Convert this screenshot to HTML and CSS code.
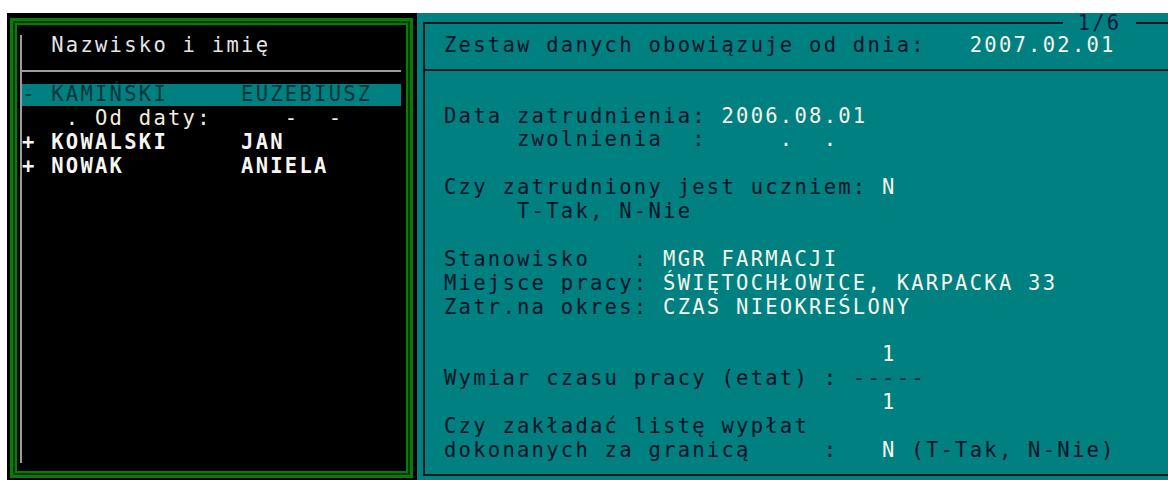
FILE: index.html
```html
<!DOCTYPE html>
<html lang="pl">
<head>
<meta charset="utf-8">
<title>Kadry – dane pracownika</title>
<link rel="stylesheet" href="styles.css">
</head>
<body>
<div class="screen">
  <section class="staff">
    <div class="frame">
      <div class="frame-inner">
        <div class="list">
          <div class="list-head">  Nazwisko i imię</div>
          <div class="list-rule"></div>
          <div class="row is-selected">- KAMIŃSKI     EUZEBIUSZ</div>
          <div class="row row-sub">   . Od daty:     -  -</div>
          <div class="row row-person">+ KOWALSKI     JAN</div>
          <div class="row row-person">+ NOWAK        ANIELA</div>
        </div>
      </div>
    </div>
  </section>

  <section class="record">
    <div class="box">
      <span class="page"> 1/6 </span>
      <div class="box-head">Zestaw danych obowiązuje od dnia:   <span class="val">2007.02.01</span></div>
      <div class="box-body">
        <div class="ln">Data zatrudnienia: <span class="val">2006.08.01</span></div>
        <div class="ln">     zwolnienia  : <span class="val">    .  .  </span></div>
        <div class="ln"></div>
        <div class="ln">Czy zatrudniony jest uczniem: <span class="val">N</span></div>
        <div class="ln">     T-Tak, N-Nie</div>
        <div class="ln"></div>
        <div class="ln">Stanowisko   : <span class="val">MGR FARMACJI</span></div>
        <div class="ln">Miejsce pracy: <span class="val">ŚWIĘTOCHŁOWICE, KARPACKA 33</span></div>
        <div class="ln">Zatr.na okres: <span class="val">CZAS NIEOKREŚLONY</span></div>
        <div class="ln"></div>
        <div class="ln">                              <span class="val">1</span></div>
        <div class="ln">Wymiar czasu pracy (etat) : -----</div>
        <div class="ln">                              <span class="val">1</span></div>
        <div class="ln">Czy zakładać listę wypłat</div>
        <div class="ln">dokonanych za granicą     :   <span class="val">N</span> (T-Tak, N-Nie)</div>
      </div>
    </div>
  </section>
</div>
</body>
</html>
```

FILE: styles.css
```css
* {
  box-sizing: border-box;
}

body {
  margin: 0;
  background: #ffffff;
}

/* 80-column text screen: every cell is 14.6px wide */
.screen {
  display: flex;
  width: 1161px;
  height: 467px;
  margin: 13px 0 0 7px;
  overflow: hidden;
  background: #000000;
  font-family: "DejaVu Sans Mono", "Liberation Mono", monospace;
  font-size: 20.5px;
  letter-spacing: 2.26px;
}

/* ---------- employee list (left) ---------- */
.staff {
  flex: none;
  display: flex;
  width: 410px;
  padding: 5px 4px 2px 3px;
  background: #000000;
}

.frame {
  flex: 1;
  display: flex;
  border: 3px solid #0b7a0b;
  padding: 2px;
  background: #003c00;
}

.frame-inner {
  flex: 1;
  display: flex;
  flex-direction: column;
  border: 2px solid #0b7a0b;
  background: #000000;
  padding: 10px 5px 8px 3px;
}

.list {
  flex: 1;
  border-left: 2px solid #9c9c9c;
}

.list-head {
  height: 20px;
  line-height: 20px;
  white-space: pre;
  color: #e4e4ea;
}

.list-rule {
  height: 2px;
  margin: 15px 0 10px -2px;
  background: #9c9c9c;
}

.row {
  height: 24px;
  line-height: 24px;
  white-space: pre;
  color: #f4f4ea;
}

.row.is-selected {
  color: #013436;
  background: linear-gradient(to bottom, transparent 2px, #008080 2px);
}

.row-sub {
  color: #f0eedc;
}

.row-person {
  font-weight: bold;
  color: #f6f6f0;
}

/* ---------- record form (right) ---------- */
.record {
  flex: none;
  display: flex;
  width: 760px;
  padding: 9px 0 4px 6px;
  background: #008080;
}

.box {
  flex: 1;
  display: flex;
  flex-direction: column;
  position: relative;
  border: 2px solid #001a1c;
  color: #001428;
}

.page {
  position: absolute;
  top: -13px;
  left: 638px;
  line-height: 24px;
  white-space: pre;
  background: #008080;
  color: #0a1a40;
}

.box-head {
  height: 47px;
  padding: 9px 0 0 19px;
  line-height: 24px;
  white-space: pre;
  border-bottom: 2px solid #001a1c;
}

.box-body {
  padding: 33.6px 0 0 19px;
}

.ln {
  height: 23.88px;
  line-height: 23.88px;
  white-space: pre;
}

.val {
  color: #f6f6ec;
}
```
